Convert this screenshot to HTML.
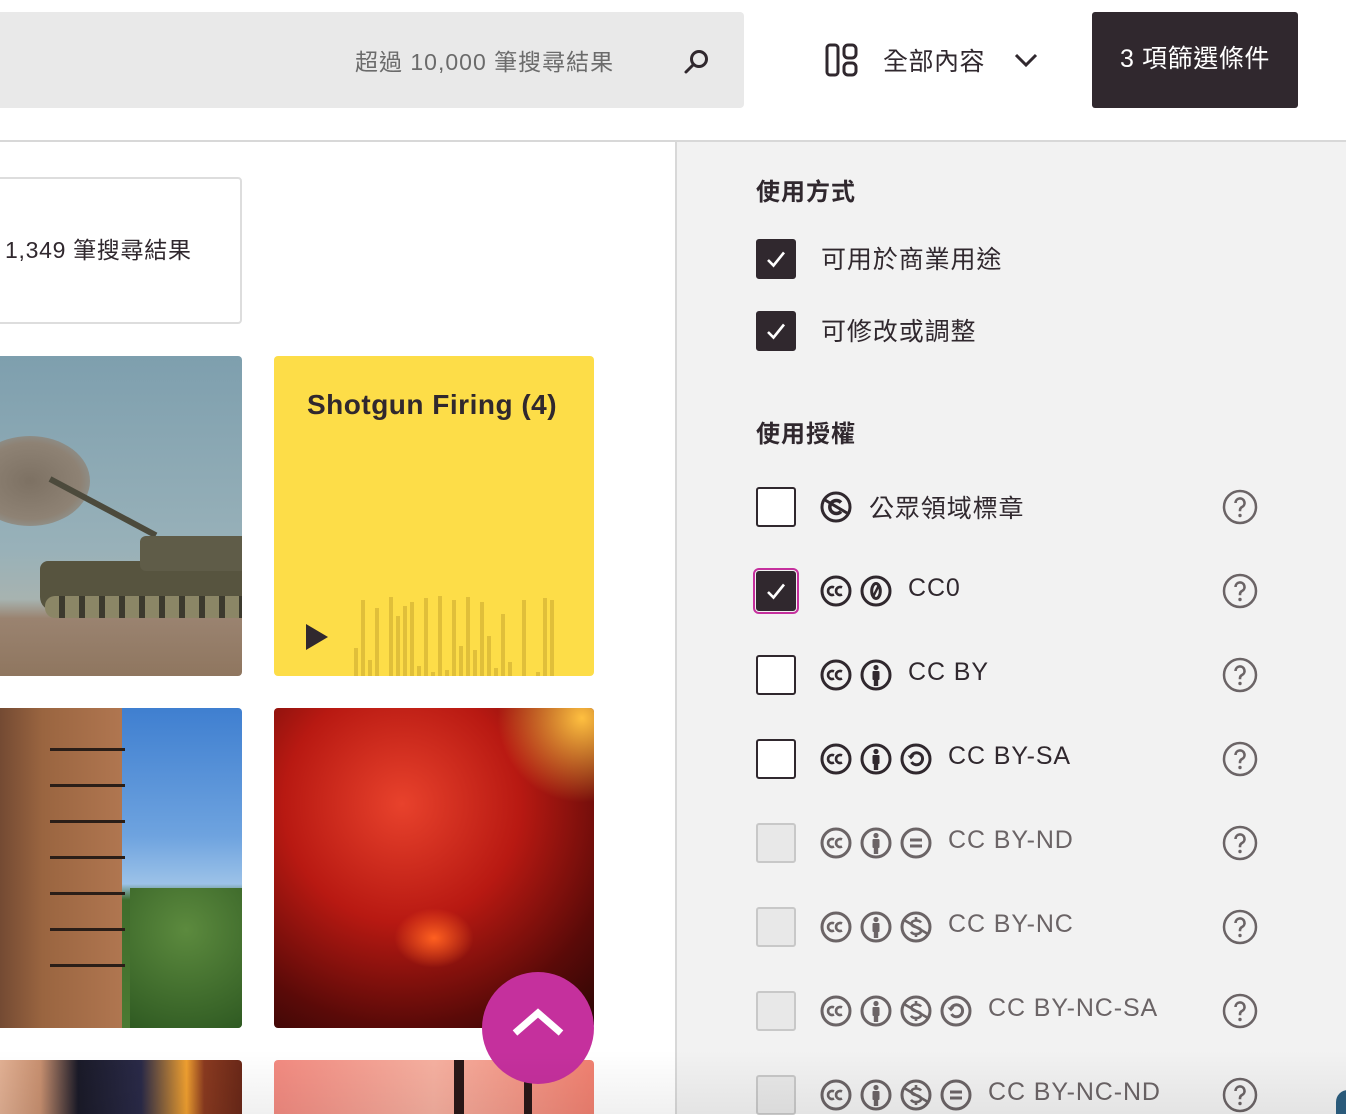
<!DOCTYPE html>
<html><head><meta charset="utf-8">
<style>
*{box-sizing:border-box;margin:0;padding:0}
html,body{width:1346px;height:1114px;overflow:hidden;background:#fff;font-family:"Liberation Sans","Noto Sans CJK TC",sans-serif;color:#30282e}
.abs{position:absolute}
.search{left:-10px;top:12px;width:754px;height:96px;background:#e9e9e9;border-radius:4px}
.ph{left:355px;top:43px;font-size:23px;color:#6b6b6b;letter-spacing:1px}
.btn{left:1092px;top:12px;width:206px;height:96px;background:#30282e;border-radius:3px;color:#fff;font-size:25px;letter-spacing:0.6px;line-height:94px;text-align:center}
.hr{left:0;top:140px;width:1346px;height:2px;background:#d8d8d8}
.side{left:675px;top:142px;width:671px;height:972px;background:#f2f2f2;border-left:2px solid #d8d8d8}
.rbox{left:-10px;top:177px;width:252px;height:147px;border:2px solid #ddd;border-radius:4px;font-size:23px;letter-spacing:0.7px;padding-left:13px;line-height:143px;color:#30282e}
.card{border-radius:4px;overflow:hidden}
h3{position:absolute;left:756px;font-size:24px;font-weight:bold;letter-spacing:1px;color:#30282e}
.cb{position:absolute;left:756px;width:40px;height:40px;border:2px solid #30282e;border-radius:3px;background:#fff}
.cb.on{background:#30282e}
.cb.dis{background:#e8e8e8;border-color:#c8c8c8}
.cb svg{position:absolute;left:4px;top:4px}
.lbl{position:absolute;font-size:25px;letter-spacing:0.9px;color:#30282e;white-space:nowrap}
.dis2{color:#6b6466}
.ic{position:absolute;width:32px;height:32px}
.q{position:absolute;left:1222px;width:36px;height:36px}
</style></head><body>
<svg width="0" height="0" style="position:absolute">
<defs>
<symbol id="cc" viewBox="0 0 32 32"><circle cx="16" cy="16" r="14" fill="none" stroke="currentColor" stroke-width="3"/><path d="M14 12.5a4 4 0 1 0 0 7M22 12.5a4 4 0 1 0 0 7" fill="none" stroke="currentColor" stroke-width="2.6"/></symbol>
<symbol id="by" viewBox="0 0 32 32"><circle cx="16" cy="16" r="14" fill="none" stroke="currentColor" stroke-width="3"/><circle cx="16" cy="8.5" r="2.6" fill="currentColor"/><rect x="12.5" y="12" width="7" height="9" rx="1" fill="currentColor"/><rect x="13.8" y="19" width="4.4" height="8" fill="currentColor"/></symbol>
<symbol id="zero" viewBox="0 0 32 32"><circle cx="16" cy="16" r="14" fill="none" stroke="currentColor" stroke-width="3"/><ellipse cx="16" cy="16" rx="4.3" ry="7.5" fill="none" stroke="currentColor" stroke-width="3"/><path d="M19 10L13 22" stroke="currentColor" stroke-width="2.5"/></symbol>
<symbol id="sa" viewBox="0 0 32 32"><circle cx="16" cy="16" r="14" fill="none" stroke="currentColor" stroke-width="3"/><path d="M11 13.5A6 6 0 1 1 11.5 19" fill="none" stroke="currentColor" stroke-width="3"/><path d="M7.5 12.5h7l-3.5 4z" fill="currentColor"/></symbol>
<symbol id="nd" viewBox="0 0 32 32"><circle cx="16" cy="16" r="14" fill="none" stroke="currentColor" stroke-width="3"/><path d="M10 13h12M10 19h12" stroke="currentColor" stroke-width="3"/></symbol>
<symbol id="nc" viewBox="0 0 32 32"><circle cx="16" cy="16" r="14" fill="none" stroke="currentColor" stroke-width="3"/><path d="M21 11.5c-1-1.5-3-2-5-2-3 0-4.5 1.5-4.5 3.3 0 4.5 9.5 2.5 9.5 7 0 2-2 3.3-5 3.3-2.3 0-4-.8-5-2.3M16 6v4M16 22.5V26" fill="none" stroke="currentColor" stroke-width="2.6"/><path d="M4 9L28 23" stroke="currentColor" stroke-width="2.6"/></symbol>
<symbol id="pd" viewBox="0 0 32 32"><circle cx="16" cy="16" r="14" fill="none" stroke="currentColor" stroke-width="3"/><path d="M21 11.5a6.5 6.5 0 1 0 0 9" fill="none" stroke="currentColor" stroke-width="3.5"/><path d="M5 9L27 22" stroke="currentColor" stroke-width="3"/></symbol>
<symbol id="q" viewBox="0 0 36 36"><circle cx="18" cy="18" r="16" fill="none" stroke="currentColor" stroke-width="2.5"/><path d="M13.5 14a4.5 4.5 0 1 1 6.5 4c-1.5.8-2 1.6-2 3.2v1" fill="none" stroke="currentColor" stroke-width="2.6"/><circle cx="18" cy="26.5" r="1.7" fill="currentColor"/></symbol>
<symbol id="chk" viewBox="0 0 28 28"><path d="M6 15l5.5 5.5L22 7.5" fill="none" stroke="#fff" stroke-width="2.6"/></symbol>
</defs></svg>

<div class="abs search"></div>
<div class="abs ph">超過 10,000 筆搜尋結果</div>
<svg class="abs" style="left:682px;top:46px" width="30" height="30" viewBox="0 0 30 30"><circle cx="17" cy="13" r="7.5" fill="none" stroke="#30282e" stroke-width="3"/><path d="M11.5 18.5L4 26" stroke="#30282e" stroke-width="3" stroke-linecap="round"/></svg>
<svg class="abs" style="left:825px;top:43px" width="34" height="34" viewBox="0 0 34 34"><rect x="2" y="2" width="11" height="30" rx="3" fill="none" stroke="#30282e" stroke-width="3"/><rect x="19" y="2" width="12" height="13" rx="4" fill="none" stroke="#30282e" stroke-width="3"/><rect x="19" y="20" width="12" height="12" rx="4" fill="none" stroke="#30282e" stroke-width="3"/></svg>
<div class="abs" style="left:883px;top:42px;font-size:25px;letter-spacing:0.5px">全部內容</div>
<svg class="abs" style="left:1012px;top:50px" width="28" height="20" viewBox="0 0 28 20"><path d="M4 5l10 10L24 5" fill="none" stroke="#30282e" stroke-width="3"/></svg>
<div class="abs btn">3 項篩選條件</div>
<div class="abs hr"></div>

<div class="abs rbox">1,349 筆搜尋結果</div>

<!-- tank -->
<div class="abs card" style="left:-10px;top:356px;width:252px;height:320px;background:linear-gradient(180deg,#7e9fae 0%,#98b1b9 60%,#a7b3b0 76%,#9a8370 82%,#8f765f 100%)">
 <div class="abs" style="left:-20px;top:80px;width:120px;height:90px;border-radius:50%;background:radial-gradient(#7d7163,#8e8274 60%,rgba(140,130,115,0))"></div>
 <div class="abs" style="left:60px;top:120px;width:120px;height:6px;background:#4c4a3c;transform:rotate(28deg);transform-origin:left"></div>
 <div class="abs" style="left:50px;top:205px;width:220px;height:50px;background:#57543f;border-radius:8px 0 0 14px"></div>
 <div class="abs" style="left:150px;top:180px;width:110px;height:35px;background:#5f5c48;border-radius:6px"></div>
 <div class="abs" style="left:55px;top:240px;width:210px;height:22px;background:repeating-linear-gradient(90deg,#8b8666 0 14px,#3c3a2e 14px 20px);border-radius:10px"></div>
</div>
<!-- audio -->
<div class="abs card" style="left:274px;top:356px;width:320px;height:320px;background:#fddd48">
 <div class="abs" style="left:33px;top:33px;font-size:28px;letter-spacing:0.5px;font-weight:bold;color:#30282e">Shotgun Firing (4)</div>
 <svg class="abs" style="left:30px;top:266px" width="26" height="30"><path d="M2 2L24 15 2 28z" fill="#30282e"/></svg>
 <svg class="abs" style="left:78px;top:238px" width="240" height="82"><g fill="#e0bf3a">
 <rect x="2" y="54" width="4" height="28"/><rect x="9" y="6" width="4" height="76"/><rect x="16" y="66" width="4" height="16"/><rect x="23" y="14" width="4" height="68"/><rect x="37" y="3" width="4" height="79"/><rect x="44" y="22" width="4" height="60"/><rect x="51" y="12" width="4" height="70"/><rect x="58" y="8" width="4" height="74"/><rect x="65" y="72" width="4" height="10"/><rect x="72" y="4" width="4" height="78"/><rect x="79" y="78" width="4" height="4"/><rect x="86" y="2" width="4" height="80"/><rect x="93" y="76" width="4" height="6"/><rect x="100" y="6" width="4" height="76"/><rect x="107" y="52" width="4" height="30"/><rect x="114" y="3" width="4" height="79"/><rect x="121" y="56" width="4" height="26"/><rect x="128" y="8" width="4" height="74"/><rect x="135" y="42" width="4" height="40"/><rect x="142" y="74" width="4" height="8"/><rect x="149" y="20" width="4" height="62"/><rect x="156" y="68" width="4" height="14"/><rect x="170" y="6" width="4" height="76"/><rect x="184" y="78" width="4" height="4"/><rect x="191" y="4" width="4" height="78"/><rect x="198" y="6" width="4" height="76"/></g></svg>
</div>
<!-- building -->
<div class="abs card" style="left:-10px;top:708px;width:252px;height:320px;background:linear-gradient(180deg,#3f7fd0 0%,#6ea3df 40%,#9cc2e8 55%,#3f6d2c 60%,#4b7a32 100%)">
 <div class="abs" style="left:0;top:0;width:132px;height:320px;background:linear-gradient(90deg,#6b4430,#9a6540 40%,#b07650)"></div>
 <div class="abs" style="left:60px;top:40px;width:75px;height:240px;background:repeating-linear-gradient(180deg,#2a1e18 0 3px,transparent 3px 36px)"></div>
 <div class="abs" style="left:140px;top:180px;width:112px;height:140px;background:radial-gradient(circle at 50% 30%,#5c8a3e,#2f5a22)"></div>
</div>
<!-- embers -->
<div class="abs card" style="left:274px;top:708px;width:320px;height:320px;background:radial-gradient(circle at 40% 30%,#e8422c,#b81912 40%,#5a0a08 75%,#2a0605)">
 <div class="abs" style="left:200px;top:0;width:120px;height:100px;background:radial-gradient(circle at 90% 10%,#ffc040,rgba(240,60,30,0) 60%)"></div>
 <div class="abs" style="left:120px;top:200px;width:80px;height:60px;background:radial-gradient(#ff6020,rgba(200,30,10,0) 70%)"></div>
</div>
<!-- bottom row -->
<div class="abs card" style="left:-10px;top:1060px;width:252px;height:54px;border-radius:4px 4px 0 0;background:linear-gradient(90deg,#e8b89c 0,#c89070 20%,#1a1a28 35%,#2a2a48 60%,#f0a030 78%,#8a3a20 85%,#6a2818 100%)"></div>
<div class="abs card" style="left:274px;top:1060px;width:320px;height:54px;border-radius:4px 4px 0 0;background:linear-gradient(90deg,#f28a80,#f6b0a0 50%,#f08070)">
 <div class="abs" style="left:180px;top:0;width:10px;height:60px;background:#2a1818"></div>
 <div class="abs" style="left:250px;top:20px;width:8px;height:50px;background:#2a1818"></div>
</div>
<!-- fab -->
<div class="abs" style="left:482px;top:972px;width:112px;height:112px;border-radius:50%;background:#c5309d"></div>
<svg class="abs" style="left:510px;top:1005px" width="56" height="36"><path d="M5 28L28 8l23 20" fill="none" stroke="#fff" stroke-width="7"/></svg>

<!-- sidebar -->
<div class="abs side"></div>
<h3 style="top:172px">使用方式</h3>
<div class="cb on" style="top:239px"><svg width="28" height="28"><use href="#chk"/></svg></div>
<div class="lbl" style="left:821px;top:240px">可用於商業用途</div>
<div class="cb on" style="top:311px"><svg width="28" height="28"><use href="#chk"/></svg></div>
<div class="lbl" style="left:821px;top:312px">可修改或調整</div>
<h3 style="top:414px">使用授權</h3>

<div class="cb" style="top:487px"></div>
<svg class="ic" style="left:820px;top:491px;color:#30282e"><use href="#pd"/></svg>
<div class="lbl" style="left:869px;top:489px">公眾領域標章</div>
<svg class="q" style="top:489px;color:#6b6466"><use href="#q"/></svg>

<div class="cb on" style="top:571px;outline:2px solid #c5309d;outline-offset:1px;border-radius:3px"><svg width="28" height="28"><use href="#chk"/></svg></div>
<svg class="ic" style="left:820px;top:575px;color:#30282e"><use href="#cc"/></svg>
<svg class="ic" style="left:860px;top:575px;color:#30282e"><use href="#zero"/></svg>
<div class="lbl" style="left:908px;top:574px">CC0</div>
<svg class="q" style="top:573px;color:#6b6466"><use href="#q"/></svg>

<div class="cb" style="top:655px"></div>
<svg class="ic" style="left:820px;top:659px;color:#30282e"><use href="#cc"/></svg>
<svg class="ic" style="left:860px;top:659px;color:#30282e"><use href="#by"/></svg>
<div class="lbl" style="left:908px;top:658px">CC BY</div>
<svg class="q" style="top:657px;color:#6b6466"><use href="#q"/></svg>

<div class="cb" style="top:739px"></div>
<svg class="ic" style="left:820px;top:743px;color:#30282e"><use href="#cc"/></svg>
<svg class="ic" style="left:860px;top:743px;color:#30282e"><use href="#by"/></svg>
<svg class="ic" style="left:900px;top:743px;color:#30282e"><use href="#sa"/></svg>
<div class="lbl" style="left:948px;top:742px">CC BY-SA</div>
<svg class="q" style="top:741px;color:#6b6466"><use href="#q"/></svg>

<div class="cb dis" style="top:823px"></div>
<svg class="ic" style="left:820px;top:827px;color:#6b6466"><use href="#cc"/></svg>
<svg class="ic" style="left:860px;top:827px;color:#6b6466"><use href="#by"/></svg>
<svg class="ic" style="left:900px;top:827px;color:#6b6466"><use href="#nd"/></svg>
<div class="lbl dis2" style="left:948px;top:826px">CC BY-ND</div>
<svg class="q" style="top:825px;color:#6b6466"><use href="#q"/></svg>

<div class="cb dis" style="top:907px"></div>
<svg class="ic" style="left:820px;top:911px;color:#6b6466"><use href="#cc"/></svg>
<svg class="ic" style="left:860px;top:911px;color:#6b6466"><use href="#by"/></svg>
<svg class="ic" style="left:900px;top:911px;color:#6b6466"><use href="#nc"/></svg>
<div class="lbl dis2" style="left:948px;top:910px">CC BY-NC</div>
<svg class="q" style="top:909px;color:#6b6466"><use href="#q"/></svg>

<div class="cb dis" style="top:991px"></div>
<svg class="ic" style="left:820px;top:995px;color:#6b6466"><use href="#cc"/></svg>
<svg class="ic" style="left:860px;top:995px;color:#6b6466"><use href="#by"/></svg>
<svg class="ic" style="left:900px;top:995px;color:#6b6466"><use href="#nc"/></svg>
<svg class="ic" style="left:940px;top:995px;color:#6b6466"><use href="#sa"/></svg>
<div class="lbl dis2" style="left:988px;top:994px">CC BY-NC-SA</div>
<svg class="q" style="top:993px;color:#6b6466"><use href="#q"/></svg>

<div class="cb dis" style="top:1075px"></div>
<svg class="ic" style="left:820px;top:1079px;color:#6b6466"><use href="#cc"/></svg>
<svg class="ic" style="left:860px;top:1079px;color:#6b6466"><use href="#by"/></svg>
<svg class="ic" style="left:900px;top:1079px;color:#6b6466"><use href="#nc"/></svg>
<svg class="ic" style="left:940px;top:1079px;color:#6b6466"><use href="#nd"/></svg>
<div class="lbl dis2" style="left:988px;top:1078px">CC BY-NC-ND</div>
<svg class="q" style="top:1077px;color:#6b6466"><use href="#q"/></svg>

<div class="abs" style="left:0;top:1050px;width:1346px;height:64px;background:linear-gradient(180deg,rgba(0,0,0,0),rgba(0,0,0,0.06))"></div>
<div class="abs" style="left:1336px;top:1090px;width:20px;height:24px;background:#2a5a7a;border-radius:12px 0 0 0"></div>
</body></html>
